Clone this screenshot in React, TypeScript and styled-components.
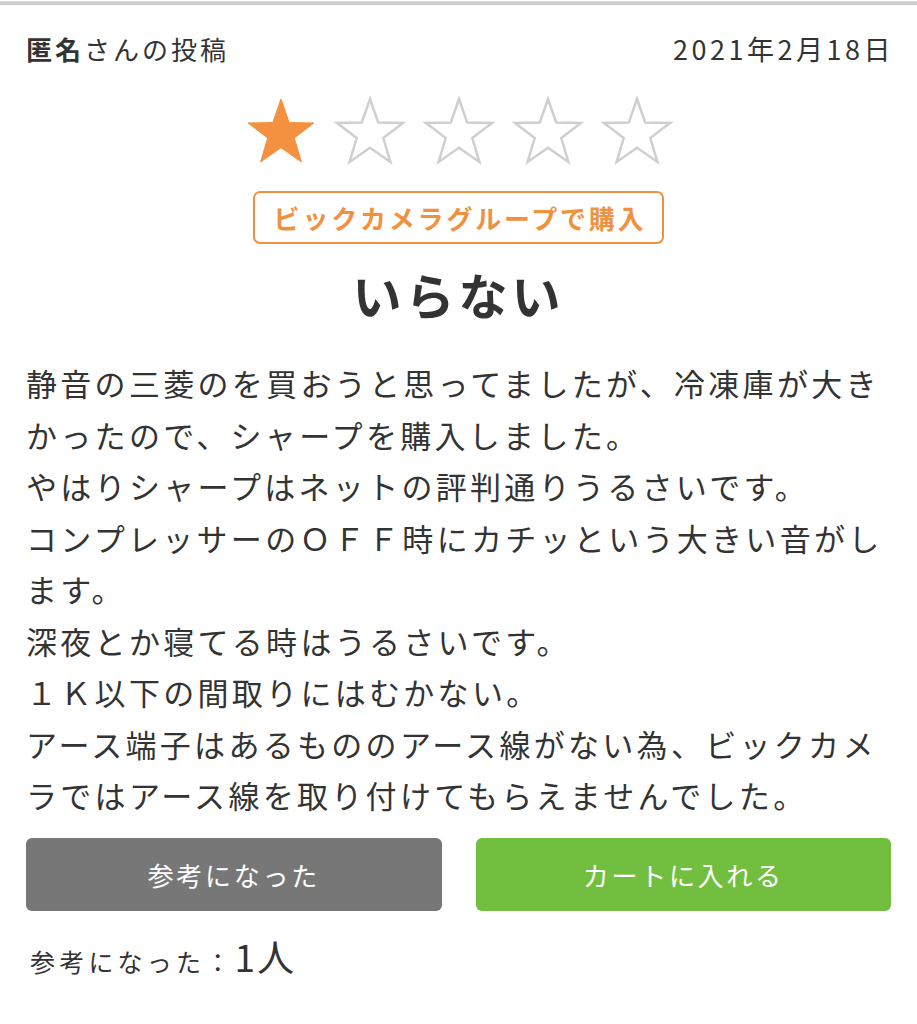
import styled, { createGlobalStyle } from "styled-components";

const GlobalStyle = createGlobalStyle`
    html, body {
        margin: 0;
        padding: 0;
        background: #fff;
    }
    body {
        font-family: "Noto Sans CJK JP", "Noto Sans", sans-serif;
        color: #333;
    }
`

const TopRule = styled.div`
    height: 4px;
    margin-top: 1px;
    background: linear-gradient(#d8d8d8, #c8c8c8);
`

const Review = styled.div`
    padding: 0 26px;
`

const Header = styled.div`
    display: flex;
    justify-content: space-between;
    align-items: center;
    margin-top: 26px;
    font-size: 26px;
    line-height: 36px;
    letter-spacing: 3px;
    color: #333;
`

const Author = styled.div`
    b {
        font-weight: 700;
    }
`

const DateText = styled.div`
    font-size: 27px;
    letter-spacing: 3.5px;
    margin-right: -3px;
`

const Stars = styled.div`
    display: flex;
    justify-content: center;
    gap: 17px;
    margin-top: 29px;
`

const Badge = styled.div`
    width: fit-content;
    margin: 25px auto 0;
    padding: 0 16px 0 19px;
    height: 49px;
    line-height: 49px;
    border: 2px solid #f0913f;
    border-radius: 7px;
    color: #f0913f;
    font-size: 26px;
    letter-spacing: 2.8px;
    font-weight: 700;
`

const Title = styled.h1`
    margin: 15px 0 0;
    text-align: center;
    font-size: 49px;
    line-height: 70px;
    letter-spacing: 4px;
    font-weight: 700;
    color: #333;
`

const Body = styled.p`
    margin: 28px 0 0;
    font-size: 31px;
    line-height: 51.5px;
    letter-spacing: 3.3px;
    color: #333;
`

const Buttons = styled.div`
    display: grid;
    grid-template-columns: 1fr 1fr;
    gap: 34px;
    margin-top: 17px;
`

const Button = styled.button<{ $color: string }>`
    height: 73px;
    border: none;
    border-radius: 6px;
    background: ${p => p.$color};
    color: #fff;
    font-family: inherit;
    font-size: 26px;
    letter-spacing: 2.7px;
`

const Helpful = styled.div`
    margin-top: 18px;
    padding-left: 4px;
    font-size: 25px;
    letter-spacing: 4.2px;
    display: flex;
    align-items: baseline;
    color: #333;
`

const Count = styled.span`
    font-size: 37px;
    letter-spacing: 2px;
`

const Star = ({ filled }: { filled: boolean }) => (
    <svg width="72" height="70" viewBox="0 0 72 70">
        <polygon
            points="36,3 44.2,26.5 69,27 49.3,42 56.4,66 36,51.7 15.6,66 22.7,42 3,27 27.8,26.5"
            fill={filled ? "#f39140" : "none"}
            stroke={filled ? "#f39140" : "#cfcfcf"}
            strokeWidth={filled ? 1 : 2.5}
            strokeLinejoin="miter"
        />
    </svg>
)

const bodyLines = [
    "静音の三菱のを買おうと思ってましたが、冷凍庫が大きかったので、シャープを購入しました。",
    "やはりシャープはネットの評判通りうるさいです。",
    "コンプレッサーのＯＦＦ時にカチッという大きい音がします。",
    "深夜とか寝てる時はうるさいです。",
    "１Ｋ以下の間取りにはむかない。",
    "アース端子はあるもののアース線がない為、ビックカメラではアース線を取り付けてもらえませんでした。",
]

export default function App() {
    const rating = 1

    return (
        <>
            <GlobalStyle />
            <TopRule />
            <Review>
                <Header>
                    <Author><b>匿名</b>さんの投稿</Author>
                    <DateText>2021年2月18日</DateText>
                </Header>
                <Stars>
                    {[1, 2, 3, 4, 5].map(n => <Star key={n} filled={n <= rating} />)}
                </Stars>
                <Badge>ビックカメラグループで購入</Badge>
                <Title>いらない</Title>
                <Body>
                    {bodyLines.map((line, i) => (
                        <span key={i}>{line}<br /></span>
                    ))}
                </Body>
                <Buttons>
                    <Button $color="#777777">参考になった</Button>
                    <Button $color="#72bf40">カートに入れる</Button>
                </Buttons>
                <Helpful>参考になった：<Count>1人</Count></Helpful>
            </Review>
        </>
    )
}
